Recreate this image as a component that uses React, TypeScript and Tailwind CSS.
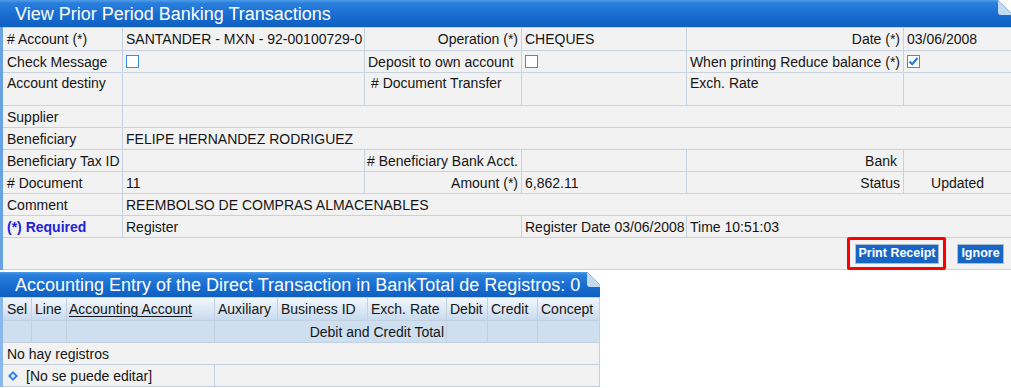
import React from "react";

const Fold = () => (
  <svg className="absolute top-0 right-0" width="15" height="16" viewBox="0 0 15 16">
    <polygon points="2,0 15,0 15,13" fill="#ffffff" />
    <path d="M2,0 L15,13 L15,15 L5,15 Q2,15 2,12 Z" fill="#c3daf5" />
    <path d="M2,0 L15,13" stroke="#8fb6e6" strokeWidth="0.8" fill="none" />
  </svg>
);

const Title = ({ children, h }: { children: React.ReactNode; h: string }) => (
  <div
    className={`relative flex items-center pl-[15px] text-[18px] leading-[20px] text-white whitespace-nowrap bg-[linear-gradient(to_bottom,#4f9deb_0%,#2a7edb_12%,#1b6fd2_50%,#0e5fc1_100%)] ${h}`}
  >
    {children}
    <Fold />
  </div>
);

const Box = ({ checked }: { checked?: boolean }) => (
  <span className="inline-flex w-[13px] h-[13px] border border-[#3a8ce6] bg-white items-center justify-center">
    {checked && (
      <svg width="11" height="11" viewBox="0 0 11 11">
        <polyline points="1.5,5.5 4.2,8.2 9.5,2" fill="none" stroke="#1f78de" strokeWidth="2" />
      </svg>
    )}
  </span>
);

const C = ({
  children,
  className = "",
}: {
  children?: React.ReactNode;
  className?: string;
}) => (
  <div className={`bg-[#f2f2f2] flex items-center px-[3px] whitespace-nowrap overflow-hidden ${className}`}>
    {children}
  </div>
);

const H = ({
  children,
  className = "",
}: {
  children?: React.ReactNode;
  className?: string;
}) => (
  <div
    className={`flex items-center px-[3px] whitespace-nowrap overflow-hidden bg-[linear-gradient(to_bottom,#f1f6fc_0%,#dde9f6_50%,#c7daee_100%)] ${className}`}
  >
    {children}
  </div>
);

const B = ({
  children,
  className = "",
}: {
  children?: React.ReactNode;
  className?: string;
}) => (
  <div className={`bg-[#cedfef] flex items-center px-[3px] whitespace-nowrap overflow-hidden ${className}`}>
    {children}
  </div>
);

const Btn = ({ children, w }: { children: React.ReactNode; w: string }) => (
  <button
    className={`h-[20px] ${w} flex items-center justify-center bg-[#1766c6] border border-[#aebed2] text-white font-bold text-[12.5px] leading-none font-['Liberation_Sans',Arial,sans-serif]`}
  >
    {children}
  </button>
);

export default function App() {
  return (
    <div className="w-[1011px] h-[388px] overflow-hidden bg-white font-['Liberation_Sans',Arial,sans-serif] text-[14px] leading-[16px] text-[#151515]">
      {/* Panel 1 */}
      <Title h="h-[27px]">View Prior Period Banking Transactions</Title>
      <div className="border-l-[3px] border-l-[#6aa3e4]">
        <div className="grid grid-cols-[119px_241px_156px_164px_216px_107px] grid-rows-[22px_21px_32px_21px_21px_21px_21px_21px_21px_31px] gap-px bg-[#c6d2e0] py-px">
          {/* row 1 */}
          <C className="pl-1"># Account (*)</C>
          <C>SANTANDER - MXN - 92-00100729-0</C>
          <C className="justify-end">Operation (*)</C>
          <C>CHEQUES</C>
          <C className="justify-end">Date (*)</C>
          <C>03/06/2008</C>
          {/* row 2 */}
          <C className="pl-1">Check Message</C>
          <C>
            <Box />
          </C>
          <C>Deposit to own account</C>
          <C>
            <Box />
          </C>
          <C className="justify-end">When printing Reduce balance (*)</C>
          <C>
            <Box checked />
          </C>
          {/* row 3 */}
          <C className="pl-1 items-start pt-[2px]">Account destiny</C>
          <C className="items-start pt-[2px]" />
          <C className="items-start pt-[2px] pl-[6px]"># Document Transfer</C>
          <C className="items-start pt-[2px]" />
          <C className="items-start pt-[2px]">Exch. Rate</C>
          <C className="items-start pt-[2px]" />
          {/* row 4 */}
          <C className="pl-1">Supplier</C>
          <C className="col-span-5" />
          {/* row 5 */}
          <C className="pl-1">Beneficiary</C>
          <C className="col-span-5">FELIPE HERNANDEZ RODRIGUEZ</C>
          {/* row 6 */}
          <C className="pl-1">Beneficiary Tax ID</C>
          <C />
          <C className="pl-[2px]"># Beneficiary Bank Acct.</C>
          <C />
          <C className="justify-end pr-[6px]">Bank</C>
          <C />
          {/* row 7 */}
          <C className="pl-1"># Document</C>
          <C>11</C>
          <C className="justify-end">Amount (*)</C>
          <C>6,862.11</C>
          <C className="justify-end">Status</C>
          <C className="justify-center">Updated</C>
          {/* row 8 */}
          <C className="pl-1">Comment</C>
          <C className="col-span-5">REEMBOLSO DE COMPRAS ALMACENABLES</C>
          {/* row 9 */}
          <C className="pl-1 font-bold text-[#2121d8]">(*) Required</C>
          <C className="col-span-2">Register</C>
          <C>Register Date 03/06/2008</C>
          <C className="col-span-2">Time 10:51:03</C>
          {/* row 10 */}
          <div className="col-span-6 bg-[#f2f2f2] flex items-center justify-end gap-[11px] pr-[7px]">
            <div className="relative z-10 h-[33px] w-[99px] border-[3px] border-[#ff0000] rounded-[2px] bg-[#f4f4f4] flex items-center pl-[5px]">
              <Btn w="w-[84px]">Print Receipt</Btn>
            </div>
            <Btn w="w-[47px]">Ignore</Btn>
          </div>
        </div>
      </div>

      {/* Panel 2 */}
      <div className="mt-[2px] w-[600px]">
        <Title h="h-[25px]">Accounting Entry of the Direct Transaction in BankTotal de Registros: 0</Title>
        <div className="border-l-[3px] border-l-[#8ab8ea]">
          <div className="grid grid-cols-[28px_34px_147px_62px_89px_78px_40px_49px_61px] grid-rows-[22px_21px_21px_21px] gap-px bg-[#c3d0df] py-px pr-px">
            {/* header */}
            <H className="pl-1">Sel</H>
            <H>Line</H>
            <H className="pl-[2px]">
              <span className="underline underline-offset-2">Accounting Account</span>
            </H>
            <H>Auxiliary</H>
            <H>Business ID</H>
            <H>Exch. Rate</H>
            <H>Debit</H>
            <H>Credit</H>
            <H>Concept</H>
            {/* totals */}
            <B />
            <B />
            <B />
            <B className="col-span-3 justify-end pr-[2px]">Debit and Credit Total</B>
            <B />
            <B />
            <B />
            {/* no records */}
            <C className="col-span-9 pl-1">No hay registros</C>
            {/* not editable */}
            <C className="col-span-3 pl-[5px] gap-[8px]">
              <svg width="10" height="10" viewBox="0 0 10 10" className="mt-[1px]">
                <polygon points="5,0 10,5 5,10 0,5" fill="#2f7fe0" />
                <polygon points="5,2.6 7.4,5 5,7.4 2.6,5" fill="#d3e6fb" />
              </svg>
              <span>[No se puede editar]</span>
            </C>
            <C className="col-span-6" />
          </div>
        </div>
      </div>
    </div>
  );
}
